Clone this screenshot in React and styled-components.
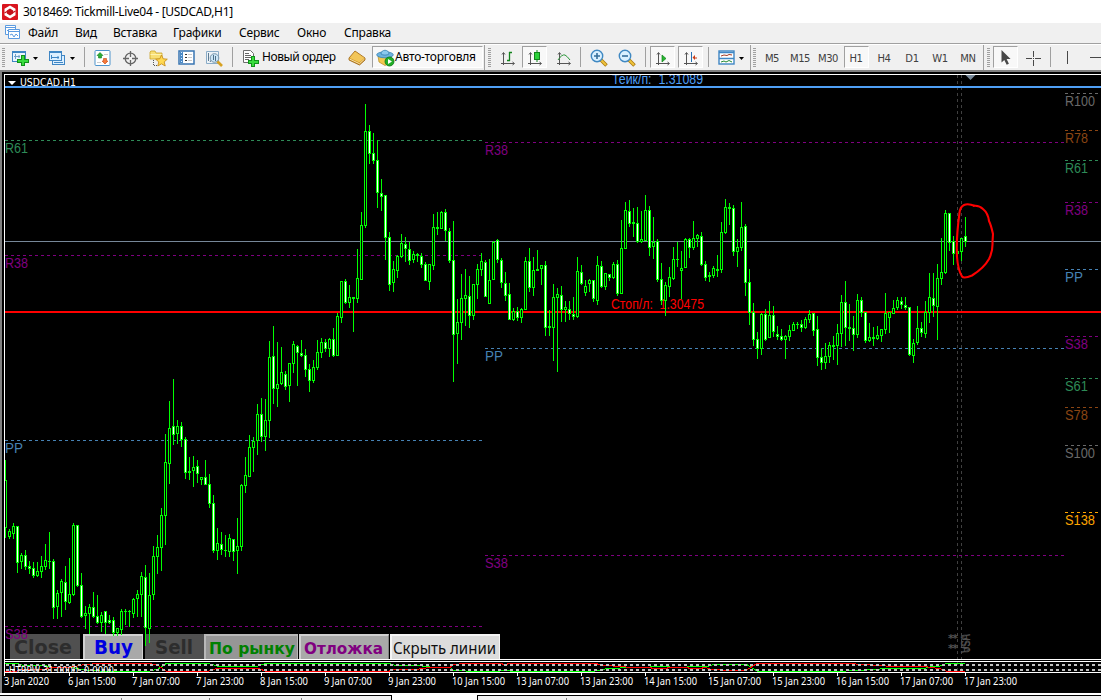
import React from 'react'
import styled, {createGlobalStyle} from 'styled-components'

const GlobalStyle = createGlobalStyle`
    *{
        box-sizing: border-box;
    }
    body{
        margin: 0;
        overflow: hidden;
        background-color: #f0f0f0;
        font-family: "Noto Sans", "Open Sans", sans-serif;
    }
`

// one row = ten hours, each candle is [high, body top, body bottom, low, bearish]
const candles = [
    [460,480,528,538,0],[529,531,537,539,0],[523,526,534,539,0],[526,526,563,573,1],[553,555,562,569,0],[550,555,567,570,1],[561,566,569,574,1],[562,568,576,578,1],[562,571,576,577,0],[556,566,572,578,0],
    [544,560,567,570,0],[532,561,562,569,0],[559,561,608,619,1],[590,593,607,619,0],[579,581,593,617,0],[566,582,602,610,1],[558,594,603,604,0],[523,525,595,596,0],[525,525,586,587,1],[573,585,617,618,1],
    [606,613,616,629,0],[604,607,614,634,0],[592,607,617,618,1],[595,616,623,624,1],[612,615,623,632,0],[611,611,623,634,1],[615,620,623,624,1],[617,620,633,636,1],[628,628,633,636,0],[609,611,630,635,0],
    [609,611,612,625,0],[610,611,612,627,0],[598,599,614,618,0],[590,594,599,617,0],[572,576,595,617,0],[565,577,628,646,1],[573,595,629,643,0],[546,556,595,600,0],[535,547,557,574,0],[508,515,548,571,0],
    [434,462,516,545,0],[401,428,464,484,0],[379,426,435,445,1],[420,426,434,444,0],[422,426,440,447,1],[437,439,473,479,1],[457,471,473,480,0],[456,467,471,487,0],[460,466,474,483,1],[477,477,480,485,0],
    [460,477,485,485,1],[474,484,504,508,1],[495,503,551,553,1],[528,543,551,560,0],[532,544,550,555,1],[535,550,551,557,0],[534,538,552,557,0],[539,539,552,561,1],[518,546,551,574,0],[484,485,547,551,0],
    [457,475,486,493,0],[435,447,477,477,0],[437,441,448,472,0],[404,414,441,455,0],[398,414,437,442,1],[399,420,437,451,0],[341,357,421,438,0],[326,356,389,404,1],[342,384,389,407,0],[347,372,384,385,0],
    [371,374,387,390,1],[363,363,386,402,0],[341,344,364,373,0],[345,346,353,386,1],[340,353,356,357,1],[349,355,370,377,1],[364,369,381,392,1],[360,367,381,383,0],[340,352,368,370,0],[338,342,353,358,0],
    [339,342,349,352,1],[338,339,349,357,0],[328,339,356,357,1],[313,316,356,356,0],[281,281,318,323,0],[279,281,303,304,1],[285,297,303,308,0],[297,297,299,332,0],[249,278,299,303,0],[212,225,280,280,0],
    [104,131,226,228,0],[125,131,154,164,1],[133,153,161,164,1],[140,160,193,208,1],[179,193,197,211,1],[195,195,238,260,1],[232,237,285,291,1],[261,269,283,292,0],[255,256,271,278,0],[234,243,257,258,0],
    [237,244,249,262,1],[242,249,261,265,1],[251,254,260,263,0],[253,254,256,262,0],[253,256,265,268,1],[262,264,281,281,1],[264,264,282,290,0],[214,227,266,270,0],[212,227,229,235,0],[211,212,229,229,0],
    [209,212,231,241,1],[228,231,261,263,1],[221,260,335,382,1],[299,322,334,364,0],[274,298,323,340,0],[269,295,299,326,0],[276,296,316,328,1],[284,284,316,320,0],[264,269,285,299,0],[253,261,270,276,0],
    [260,262,297,297,1],[259,280,304,304,0],[241,242,280,280,0],[239,240,260,263,1],[258,260,283,288,1],[272,283,296,301,1],[283,294,320,320,1],[308,311,320,321,0],[307,311,318,321,1],[308,309,318,323,0],
    [257,261,310,310,0],[248,261,288,292,1],[257,270,288,296,0],[250,269,271,271,0],[265,265,269,285,0],[261,265,328,336,1],[310,326,328,336,0],[284,297,328,361,0],[288,294,298,372,0],[286,295,310,322,1],
    [301,307,310,322,0],[301,309,314,320,1],[297,314,317,320,1],[257,271,317,318,0],[265,272,284,285,1],[280,286,293,296,0],[279,280,284,292,0],[280,280,299,302,1],[256,265,301,305,0],[261,266,287,288,1],
    [273,273,287,290,0],[274,274,278,281,1],[262,264,278,279,0],[260,264,294,296,1],[220,248,294,294,0],[202,210,249,249,0],[200,211,224,227,1],[208,222,224,237,0],[207,223,242,243,1],[211,239,242,243,0],
    [195,210,241,241,0],[206,210,248,256,1],[217,242,247,259,0],[239,241,280,282,1],[263,279,301,305,1],[282,285,301,316,0],[267,277,287,297,0],[247,259,279,280,0],[242,259,260,267,0],[251,268,271,299,0],
    [238,239,268,268,0],[238,239,248,258,1],[221,238,248,250,0],[234,235,239,247,0],[232,236,265,266,1],[261,264,278,281,1],[272,275,277,282,0],[266,268,276,278,0],[255,269,271,277,0],[222,232,270,273,0],
    [199,207,233,234,0],[203,207,209,225,0],[205,208,252,256,1],[239,247,252,267,0],[202,227,248,251,0],[224,226,283,296,1],[269,282,313,325,1],[303,312,340,346,1],[332,339,349,359,1],[313,314,349,355,0],
    [309,314,340,341,1],[301,315,338,338,0],[306,315,332,337,1],[326,334,337,340,1],[329,336,340,341,1],[335,336,340,359,0],[325,330,337,341,0],[322,324,331,331,0],[322,324,325,329,0],[320,324,328,332,1],
    [317,319,328,329,0],[310,314,320,323,0],[313,313,331,336,1],[316,329,358,366,1],[348,357,363,370,1],[343,356,363,369,0],[342,345,357,363,0],[336,345,347,360,0],[324,333,346,365,0],[295,302,334,347,0],
    [281,302,328,346,1],[304,327,329,341,0],[316,328,335,351,1],[294,300,335,338,0],[297,300,313,317,1],[312,312,341,343,1],[323,337,341,342,0],[327,337,339,346,0],[326,335,339,340,0],[329,329,336,342,0],
    [293,313,330,334,0],[312,312,318,333,0],[300,308,314,314,0],[297,300,308,310,0],[297,301,305,309,1],[297,305,308,310,1],[307,307,355,356,1],[339,343,356,363,0],[306,328,343,345,0],[322,328,333,337,1],
    [301,312,334,338,0],[273,297,313,323,0],[273,298,306,317,1],[264,278,307,340,0],[238,272,279,285,0],[210,213,273,274,0],[213,213,243,251,1],[236,241,254,265,1],[251,251,254,261,0],[238,238,252,261,0],
    [217,236,242,247,1],
]

// [x from, x to, y, color, label, label width]
const levels = [
    [5, 483, 140, '#2e8b57', 'R61', 23],
    [5, 483, 255, '#800080', 'R38', 23],
    [5, 483, 440, '#4682b4', 'PP', 18],
    [5, 483, 626, '#800080', 'S38', 23],
    [485, 1064, 142, '#800080', 'R38', 23],
    [485, 1064, 348, '#4682b4', 'PP', 18],
    [485, 1064, 555, '#800080', 'S38', 23],
    [1065, 1098, 93, '#696969', 'R100', 30],
    [1065, 1098, 130, '#8b4513', 'R78', 23],
    [1065, 1098, 160, '#2e8b57', 'R61', 23],
    [1065, 1098, 202, '#800080', 'R38', 23],
    [1065, 1098, 269, '#4682b4', 'PP', 18],
    [1065, 1098, 336, '#800080', 'S38', 23],
    [1065, 1098, 378, '#2e8b57', 'S61', 23],
    [1065, 1098, 407, '#8b4513', 'S78', 23],
    [1065, 1098, 445, '#696969', 'S100', 30],
    [1065, 1098, 512, '#ffa500', 'S138', 30],
]

const dates = [
    '3 Jan 2020', '6 Jan 15:00', '7 Jan 07:00', '7 Jan 23:00', '8 Jan 15:00', '9 Jan 07:00', '9 Jan 23:00', '10 Jan 15:00',
    '13 Jan 07:00', '13 Jan 23:00', '14 Jan 15:00', '15 Jan 07:00', '15 Jan 23:00', '16 Jan 15:00', '17 Jan 07:00', '17 Jan 23:00',
]

// oscillator: the red line is the green one mirrored around the middle
const wave = [
    [5,663],[15,663],[22,665],[43,665],[51,667],[70,667],[84,670],[100,671],[150,671],[158,669],[167,663],[207,663],[217,666],[258,666],[267,663],
    [388,663],[394,665],[415,665],[430,667],[450,667],[453,670],[466,671],[500,671],[505,670],[510,671],[595,671],[605,669],[620,668],[632,667],[650,667],[653,666],[665,666],
    [670,667],[687,667],[690,666],[700,666],[705,667],[712,665],[728,664],[746,664],[757,671],[846,671],[865,670],[880,669],[892,668],[926,668],[930,667],[940,666],[947,663],[965,663],
]
const toPoints = (list) => list.map((p) => p.join(',')).join(' ')

const App = () => {
    return (
        <Window>
            <GlobalStyle />
            <TitleBar>
                <LogoIcon />
                <Title>3018469: Tickmill-Live04 - [USDCAD,H1]</Title>
            </TitleBar>
            <MenuBar>
                <ChildIcon />
                <MenuItem $w={29} $ml={8}>Файл</MenuItem>
                <MenuItem $w={21} $ml={18}>Вид</MenuItem>
                <MenuItem $w={42} $ml={17}>Вставка</MenuItem>
                <MenuItem $w={48} $ml={18}>Графики</MenuItem>
                <MenuItem $w={40} $ml={18}>Сервис</MenuItem>
                <MenuItem $w={29} $ml={18}>Окно</MenuItem>
                <MenuItem $w={46} $ml={18}>Справка</MenuItem>
            </MenuBar>
            <Toolbar />
            <ChartWindow />
            <TabStrip>
                <Tab $w={122} />
                <Tab $w={88} />
                <Tab $w={92} />
                <Tab $w={89} $last />
                <Tab $w={87} $active />
                <Tab $w={89} />
                <Tab $w={534} $last />
            </TabStrip>
        </Window>
    )
}
export default App;

const Toolbar = () => (
    <ToolRow>
        <GripSlot />
        <Tool><NewChartIcon /></Tool>
        <Tool $w={7}><Arrow /></Tool>
        <Tool $ml={5}><ProfilesIcon /></Tool>
        <Tool $w={7}><Arrow /></Tool>
        <Separator $ml={8} />
        <Tool $ml={5}><MarketIcon /></Tool>
        <Tool $ml={3}><DataIcon /></Tool>
        <Tool $ml={3}><NavigatorIcon /></Tool>
        <Tool $ml={3}><TerminalIcon /></Tool>
        <Tool $ml={3}><TesterIcon /></Tool>
        <Separator $ml={5} />
        <Tool $ml={6} $w={23}><OrderIcon /></Tool>
        <ToolText $w={75} $ls={-.4}>Новый ордер</ToolText>
        <Tool $ml={7}><BookIcon /></Tool>
        <Pressed $ml={3} $w={111}>
            <ExpertIcon />
            <ToolText $w={84}>Авто-торговля</ToolText>
        </Pressed>
        <Separator $ml={1} $tall />
        <GripSlot $ml={1} />
        <Tool $ml={2}><BarsIcon /></Tool>
        <Pressed $ml={2}><CandleIcon /></Pressed>
        <Tool $ml={4}><LineIcon /></Tool>
        <Separator $ml={4} />
        <Tool $ml={5}><ZoomIcon plus /></Tool>
        <Tool $ml={3}><ZoomIcon /></Tool>
        <Separator $ml={6} />
        <Pressed $ml={4}><ScrollIcon /></Pressed>
        <Pressed $ml={3}><ShiftIcon /></Pressed>
        <Separator $ml={5} />
        <Tool $ml={5}><TemplateIcon /></Tool>
        <Tool $w={5}><Arrow /></Tool>
        <Separator $ml={6} $tall />
        <GripSlot />
        {['M5', 'M15', 'M30', 'H1', 'H4', 'D1', 'W1', 'MN'].map((p) => (
            <Tool key={p} $w={28}>
                {p === 'H1' ? <Pressed><Period>{p}</Period></Pressed> : <Period>{p}</Period>}
            </Tool>
        ))}
        <Separator $ml={1} $tall />
        <GripSlot $ml={1} />
        <Pressed $ml={1}><CursorIcon /></Pressed>
        <Tool $ml={3}><CrossIcon /></Tool>
        <Separator $ml={4} />
        <Tool $ml={4}><svg width="16" height="16"><path d="M7.500 1v13" stroke="#484848" /></svg></Tool>
        <Tool $ml={3}><svg width="14" height="16"><path d="M1 7.500h13" stroke="#484848" /></svg></Tool>
    </ToolRow>
)

const GripSlot = ({$ml}) => <Tool $w={7} $ml={$ml}><Grip /></Tool>

const ChartWindow = () => (
    <Frame>
        <TradeButtons>
            <TradeButton $w={70} $pad={2} $bg="#505050" $color="#2d2d2d">
                <Caption w={58} size={19}>Close</Caption>
            </TradeButton>
            <TradeButton $ml={3} $w={60} $pad={9} $bg="#a9a9a9" $color="#0000e0" $edge="#d0d0d0">
                <Caption w={39} size={19}>Buy</Caption>
            </TradeButton>
            <TradeButton $ml={2} $w={59} $pad={8} $bg="#505050" $color="#2d2d2d">
                <Caption w={38} size={19}>Sell</Caption>
            </TradeButton>
            <TradeButton $w={94} $pad={3} $bg="#969696" $color="#008000" $edge="#b8b8b8">
                <Caption w={86} size={16}>По рынку</Caption>
            </TradeButton>
            <TradeButton $ml={1} $w={90} $pad={3} $bg="#a9a9a9" $color="#800080" $edge="#d0d0d0" $shade>
                <Caption w={79} size={16}>Отложка</Caption>
            </TradeButton>
            <TradeButton $ml={1} $w={110} $pad={1} $bg="#dcdcdc" $color="#101010" $edge="#f4f4f4">
                <Caption w={103} size={17} light>Скрыть линии</Caption>
            </TradeButton>
        </TradeButtons>
        <Plot viewBox="0 70 1101 625" width="1101" height="625">
            <g shapeRendering="crispEdges">
                <path d="M4.5 661V74.5H1101M4 659.5H1101M4.5 673V661.5H1101M4 672.5H1101" fill="none" stroke="#fff" />
                <path d="M0 694H1101" stroke="#fff" strokeWidth="2" />
                <path d="M957.5 75V659M961.5 75V659" stroke="#404040" strokeDasharray="3 3" />
                <path d="M957.5 662V672M961.5 662V672" stroke="#333" strokeDasharray="3 3" />
                {levels.map(([from, to, y, color], i) => (
                    <path key={i} d={`M${from} ${y + .5}H${to}`} stroke={color} strokeDasharray="3 3" />
                ))}
                <path d="M5 241.5H1101" stroke="#778899" />
                <path d="M5 312H1101" stroke="#f00" strokeWidth="2" />
                <path d="M5 87H1101" stroke="#4f9ff5" strokeWidth="2" />
            </g>
            {levels.map(([x, , y, color, label, w], i) => (
                <Level key={i} x={x} y={y + 13} fill={color} textLength={w} lengthAdjust="spacingAndGlyphs">{label}</Level>
            ))}
            <Level x="611" y="309" fill="#f00" textLength="93" lengthAdjust="spacingAndGlyphs">Стоп/л:  1.30475</Level>
            <clipPath id="top"><path d="M5 75H1101V90H5Z" /></clipPath>
            <g clipPath="url(#top)">
                <Level x="612" y="84" fill="#4f9ff5" textLength="91" lengthAdjust="spacingAndGlyphs">Тейк/п:  1.31089</Level>
            </g>
            <clipPath id="sym"><path d="M5 75H200V86H5Z" /></clipPath>
            <g clipPath="url(#sym)">
                <path d="M8 81h8l-4 4z" fill="#fff" />
                <Small x="20" y="86" textLength="56" lengthAdjust="spacingAndGlyphs">USDCAD,H1</Small>
            </g>
            <path d="M965.5 75h10l-5 5z" fill="#778899" />
            <g shapeRendering="crispEdges">
                {candles.map(([high, top, bottom, low, bear], i) => {
                    const x = 5 + i * 4
                    return (
                        <g key={i} fill="#0f0">
                            <rect x={x} y={high} width="1" height={low - high} />
                            <rect x={x - 1} y={top} width="3" height={bottom - top} />
                            {bottom - top > 2 && <rect x={x} y={top + 1} width="1" height={bottom - top - 2} fill={bear ? '#fff' : '#000'} />}
                        </g>
                    )
                })}
                <path d="M4.5 440V560" stroke="#fff" />
            </g>
            <path
                d="M975 206Q968 203 964 205Q960 207 959.500 213Q956 238 957 257Q958 270 962 276.500Q964 279 972 275.500Q984 268 989 259Q993 251 992.500 242L993 234Q991 225 989 221Q988 213 983 209Q979 205 973 206"
                fill="none" stroke="#f00" strokeWidth="2.1"
            />
            <Star x="948" y="642">**</Star>
            <Star x="948" y="652">**</Star>
            <Event transform="translate(970 653) rotate(-90)" textLength="19" lengthAdjust="spacingAndGlyphs">USA</Event>
            <Event transform="translate(961 634) rotate(90)" textLength="19" lengthAdjust="spacingAndGlyphs">USA</Event>
            <g shapeRendering="crispEdges" fill="none">
                <polyline points={toPoints(wave)} stroke="#0f0" />
                <polyline points={toPoints(wave.map(([x, y]) => [x, 1334.5 - y]))} stroke="#f00" />
                <path d="M6 665H1101M6 670H1101" stroke="#c0c0c0" strokeWidth="2" strokeDasharray="3 3" />
            </g>
            <clipPath id="osc"><path d="M5 666H200V672H5Z" /></clipPath>
            <g clipPath="url(#osc)">
                <Small x="9" y="674" textLength="105" lengthAdjust="spacingAndGlyphs">HTRPW 31.0000 -0.0000</Small>
            </g>
            {dates.map((d, i) => (
                <g key={d}>
                    <rect x={i ? 5 + i * 64 : 4} y="673" width="1" height="3" fill="#fff" />
                    <DateText x={4 + i * 64} y="685" textLength={d.length === 12 ? 53 : d.length === 11 ? 48 : 45} lengthAdjust="spacingAndGlyphs">{d}</DateText>
                </g>
            ))}
        </Plot>
    </Frame>
)

const Caption = ({w, size, light, children}) => (
    <CaptionBox width={w + 1} height="23">
        <CaptionText $size={size} $light={light} x="0" y="18" textLength={w} lengthAdjust="spacingAndGlyphs">{children}</CaptionText>
    </CaptionBox>
)

const LogoIcon = () => (
    <svg width="16" height="16">
        <rect width="16" height="16" rx="1" fill="#d9141e" />
        <path d="M8 1.500L13.500 4.800V11.200L8 14.500L2.500 11.200V4.800Z" fill="#fff" />
        <path d="M8 4.500l3.200 1.900v3.200L8 11.500 4.800 9.600V6.400z" fill="#c4101a" />
        <path d="M2.500 9L5 7.500M11 8.500L13.500 7" stroke="#c4101a" strokeWidth="1.200" />
    </svg>
)
const ChildIcon = () => (
    <svg width="15" height="15" fill="none" stroke="#5c9be0">
        <path d="M.5.5h10v9h-10zM.5 2.500h10M2 5l2 2 2-2" fill="#fff" />
        <path d="M3.500 4.500h11v9h-11zM3.500 6.500h11" fill="#fff" />
        <path d="M5 10l2-1 2 3 2-3 2 2" />
    </svg>
)
const Arrow = () => <svg width="5" height="3"><path d="M0 0h5L2.500 3z" fill="#000" /></svg>
const NewChartIcon = () => (
    <svg width="18" height="16">
        <rect x="1.500" y="1.500" width="13" height="10" fill="#eaf5ff" stroke="#3f86c4" />
        <path d="M1 2.500h14" stroke="#3f86c4" />
        <path d="M4.500 4v5M3 6.500h6M8 5v3" stroke="#6f9fc8" fill="none" />
        <path d="M10 5h4v4h4v4h-4v3h-4v-3H6V9h4z" fill="#11921a" />
        <path d="M11 6h2v4h4v2h-4v3h-2v-3H7v-2h4z" fill="#39dc3e" />
    </svg>
)
const ProfilesIcon = () => (
    <svg width="18" height="16" stroke="#3f86c4" fill="#dcefff">
        <rect x="4.500" y="5.500" width="12" height="9" />
        <path d="M6 12.500h9" />
        <rect x="1.500" y="1.500" width="12" height="9" />
        <path d="M1 2.500h13M3.500 5v4M3 7.500h8M10 6v3" />
    </svg>
)
const MarketIcon = () => (
    <svg width="17" height="16">
        <rect x="1" y=".5" width="15" height="15" rx="1" fill="#fff" stroke="#4e94cc" />
        <path d="M10 4.500h4M3 12.500h4" stroke="#ccc" />
        <path d="M6 2.500l3 3H7.500V8h-3V5.500H3z" fill="#2cae35" stroke="#12801c" strokeWidth=".6" />
        <path d="M11 14l-3-3h1.500V8.500h3V11H14z" fill="#f57a3a" stroke="#c74310" strokeWidth=".6" />
    </svg>
)
const DataIcon = () => (
    <svg width="17" height="17" fill="none" stroke="#666" strokeWidth="1.300">
        <circle cx="8.500" cy="8.500" r="5.300" />
        <path d="M8.500 1v6M8.500 10v6M1 8.500h6M10 8.500h6" />
    </svg>
)
const NavigatorIcon = () => (
    <svg width="19" height="17">
        <path d="M1 2l1-1h4l1 2h6v6H1z" fill="#f8df75" stroke="#c9a227" strokeWidth=".8" />
        <path d="M1.500 4.500h11" stroke="#fff3b0" />
        <path d="M4.500 10v6M5 15.500h4" stroke="#555" strokeDasharray="1 1" />
        <path d="M12.500 5l1.700 3.800 4.100.4-3.100 2.700 1 4.100-3.700-2.200L8.800 16l1-4.100-3.100-2.700 4.100-.4z" fill="#ffd951" stroke="#c8901c" strokeWidth=".9" />
    </svg>
)
const TerminalIcon = () => (
    <svg width="17" height="16">
        <rect x="1" y="1" width="15" height="13" fill="#fff" stroke="#3975b2" strokeWidth="1.500" />
        <rect x="2" y="2" width="3" height="11" fill="#4b8ac6" />
        <path d="M3.500 2v11" stroke="#d8eaff" strokeDasharray="1 2" />
        <path d="M7 4.500h2M7 7.500h2M7 10.500h2" stroke="#333" />
        <path d="M10 4.500h4M10 7.500h4M10 10.500h4" stroke="#c9c9c9" />
    </svg>
)
const TesterIcon = () => (
    <svg width="19" height="17">
        <path d="M1.500 1.500h12v12h-12z" fill="#edf3f8" stroke="#8badc8" />
        <path d="M3.500 3v8M5 12l2-3" stroke="#5e7b91" />
        <path d="M12 11l5 5" stroke="#d7a122" strokeWidth="2.600" />
        <circle cx="9.500" cy="8" r="4.300" fill="#cce6f7" stroke="#7795aa" />
        <path d="M8.500 5v5M10.500 6v5" stroke="#4f7189" />
    </svg>
)
const OrderIcon = () => (
    <svg width="17" height="18">
        <path d="M1.500 1.500h7l3 3v9h-10z" fill="#fff" stroke="#6e6e6e" />
        <path d="M3 4.500h4M3 6.500h6M3 8.500h6M3 10.500h4" stroke="#666" />
        <path d="M9 7h4v4h4v4h-4v3H9v-3H6v-4h3z" fill="#11921a" />
        <path d="M10 8h2v4h4v2h-4v3h-2v-3H7v-2h3z" fill="#39dc3e" />
    </svg>
)
const BookIcon = () => (
    <svg width="18" height="16">
        <path d="M1 8l6-7 10 7v2l-5.500 5L1 10z" fill="#c98a1c" stroke="#99600c" strokeWidth=".8" />
        <path d="M1.500 8L7 1.500 16.500 8l-5 4.500z" fill="#f2c65a" />
        <path d="M1.500 9l10 4.700L16.500 9" stroke="#fff0bb" fill="none" strokeWidth=".9" />
    </svg>
)
const ExpertIcon = () => (
    <svg width="19" height="18">
        <path d="M2 7l1 6 6 3.500 6-3V7z" fill="#f1c84f" stroke="#b88a1f" strokeWidth=".7" />
        <ellipse cx="9" cy="5.800" rx="8.300" ry="3" fill="#6db3df" stroke="#3682b2" strokeWidth=".8" />
        <path d="M5 5c0-5 8-5 8 0-2 1.500-6 1.500-8 0z" fill="#8bc9ef" stroke="#3682b2" strokeWidth=".8" />
        <circle cx="13.500" cy="12.500" r="4.500" fill="#21ae28" stroke="#0b7914" strokeWidth=".8" />
        <path d="M12 10v5l4-2.500z" fill="#fff" />
    </svg>
)
const Axes = () => <path d="M3.500 3v12M1 13.500h13M2 4.500l1.500-2 1.500 2M12.500 12l2 1.500-2 1.500" stroke="#555" fill="none" />
const BarsIcon = () => (
    <svg width="16" height="17">
        <Axes />
        <path d="M9.500 2v9M7 10.500h3M9 2.500h3" stroke="#11831b" strokeWidth="1.300" />
    </svg>
)
const CandleIcon = () => (
    <svg width="16" height="17">
        <Axes />
        <path d="M10 0v12" stroke="#11831b" />
        <rect x="7.500" y="2.500" width="5" height="7" fill="#2bd23a" stroke="#11831b" />
    </svg>
)
const LineIcon = () => (
    <svg width="16" height="17">
        <Axes />
        <path d="M2 10q4-6 7-5 2 1 5 5" stroke="#2b973a" fill="none" />
    </svg>
)
const ZoomIcon = ({plus}) => (
    <svg width="18" height="18">
        <path d="M11 11l5.500 5.500" stroke="#a87911" strokeWidth="3.500" />
        <path d="M11 11l5 5" stroke="#efc33b" strokeWidth="2" />
        <circle cx="7" cy="7" r="5.700" fill="#d9f0ff" stroke="#3f88c2" strokeWidth="1.400" />
        <path d={plus ? 'M4 7h6M7 4v6' : 'M4 7h6'} stroke="#356e9b" strokeWidth="1.600" />
    </svg>
)
const ScrollIcon = () => (
    <svg width="16" height="17">
        <Axes />
        <path d="M7 5v7l4-3.500z" fill="#27b532" stroke="#11831b" strokeWidth=".7" />
    </svg>
)
const ShiftIcon = () => (
    <svg width="16" height="17">
        <Axes />
        <path d="M8.500 2v10" stroke="#2772b4" />
        <path d="M14 7.500h-2V5L9.500 7.500l2.500 2.500V8.500h2z" fill="#c93c16" />
    </svg>
)
const TemplateIcon = () => (
    <svg width="17" height="16">
        <rect x="1" y="1" width="15" height="13" fill="#fff" stroke="#3f86c4" strokeWidth="1.400" />
        <path d="M1 2.500h15M1 8.500h15" stroke="#3f86c4" strokeWidth="1.500" />
        <path d="M3 6l3-1 3 .5 2-1 3 .5" stroke="#a33a24" fill="none" />
        <path d="M3 12l3-1 2 1 3-1.500 3 1.500" stroke="#248a32" fill="none" />
    </svg>
)
const CursorIcon = () => (
    <svg width="16" height="16">
        <path d="M3.500 0v12.500l2.800-2.500 2.400 4.700 2.200-1L8.600 9h4z" fill="#484848" />
    </svg>
)
const CrossIcon = () => (
    <svg width="17" height="17" stroke="#484848">
        <path d="M8.500 1v6M8.500 10v6M1 8.500h6M10 8.500h6M8 8.500h1" />
    </svg>
)

const Window = styled.div`
    width: 1101px;
    height: 700px;
    display: flex;
    flex-direction: column;
    overflow: hidden;
`
const TitleBar = styled.div`
    height: 23px;
    flex: none;
    display: flex;
    align-items: center;
    padding-left: 2px;
    background-color: #fff;
`
const Title = styled.span`
    margin-left: 5px;
    font-size: 12px;
    letter-spacing: -.3px;
    white-space: nowrap;
    color: #000;
`
const MenuBar = styled.div`
    height: 20px;
    flex: none;
    display: flex;
    align-items: center;
    padding-left: 5px;
    padding-bottom: 1px;
    background-color: #f0f0f0;
`
const MenuItem = styled.span`
    width: ${(props) => props.$w}px;
    margin-left: ${(props) => props.$ml}px;
    font-size: 12px;
    letter-spacing: -.2px;
    white-space: nowrap;
    color: #000;
`
const ToolRow = styled.div`
    height: 27px;
    flex: none;
    display: flex;
    align-items: center;
    border-top: 1px solid #a0a0a0;
    background-color: #f0f0f0;
    box-shadow: inset 0 1px #fff;
    overflow: hidden;
`
const Tool = styled.div`
    width: ${(props) => props.$w || 25}px;
    height: 22px;
    margin-left: ${(props) => props.$ml || 0}px;
    flex: none;
    display: flex;
    align-items: center;
    justify-content: center;

    > svg{
        margin-top: 2px;
    }
`
const Pressed = styled(Tool)`
    border: 1px solid #a0a0a0;
    border-right-color: #fff;
    border-bottom-color: #fff;
    background-color: #f8f8f8;
`
const ToolText = styled.span`
    width: ${(props) => props.$w}px;
    flex: none;
    font-size: 12px;
    line-height: 18px;
    letter-spacing: ${(props) => props.$ls || -.2}px;
    white-space: nowrap;
    color: #000;
`
const Period = styled.span`
    margin-top: 2px;
    font-family: "DejaVu Sans", sans-serif;
    font-size: 10px;
    letter-spacing: -.4px;
    color: #404040;
`
const Separator = styled.div`
    width: 1px;
    height: ${(props) => (props.$tall ? 25 : 20)}px;
    margin-left: ${(props) => props.$ml}px;
    flex: none;
    background-color: #a0a0a0;
`
const Grip = styled.div`
    width: 3px;
    height: 19px;
    background: repeating-linear-gradient(#a0a0a0 0 1px, #f0f0f0 1px 2px);
`
const Frame = styled.div`
    position: relative;
    height: 625px;
    flex: none;
    background-color: #000;
    border-top: 2px solid #808080;
    border-left: 2px solid #808080;
`
const Plot = styled.svg`
    position: absolute;
    top: -2px;
    left: -2px;
    display: block;
`
const TradeButtons = styled.div`
    position: absolute;
    left: 8px;
    top: 562px;
    display: flex;
`
const TradeButton = styled.div`
    width: ${(props) => props.$w}px;
    height: 25px;
    margin-left: ${(props) => props.$ml || 0}px;
    padding-left: ${(props) => props.$pad}px;
    background-color: ${(props) => props.$bg};
    border-style: solid;
    border-width: 2px 1px 0 2px;
    border-color: ${(props) => props.$edge || props.$bg};
    border-right-color: ${(props) => (props.$shade ? '#808080' : props.$edge || props.$bg)};
    fill: ${(props) => props.$color};
`
const CaptionBox = styled.svg`
    display: block;
    overflow: visible;
`
const CaptionText = styled.text`
    font-family: ${(props) => (props.$light ? '"Noto Sans"' : '"DejaVu Sans"')}, sans-serif;
    font-weight: ${(props) => (props.$light ? 400 : 700)};
    font-size: ${(props) => props.$size}px;
`
const Level = styled.text`
    font-family: "Liberation Sans", Arial, sans-serif;
    font-size: 14px;
    white-space: pre;
`
const Small = styled.text`
    font-family: "DejaVu Sans", sans-serif;
    font-size: 10px;
    fill: #fff;
`
const DateText = styled.text`
    font-family: "Noto Sans", sans-serif;
    font-size: 10px;
    fill: #fff;
`
const Event = styled.text`
    font-family: "Liberation Sans", Arial, sans-serif;
    font-size: 12px;
    fill: #505050;
`
const Star = styled(Event)`
    font-weight: 700;
    font-family: "DejaVu Sans", sans-serif;
    font-size: 11px;
    letter-spacing: -1.5px;
`
const TabStrip = styled.div`
    height: 5px;
    flex: none;
    display: flex;
    background-color: #f0f0f0;
`
const Tab = styled.div`
    width: ${(props) => props.$w}px;
    height: 5px;
    flex: none;
    background: ${(props) => (props.$active
        ? '#fff'
        : `linear-gradient(#000 0 1px, transparent 1px), linear-gradient(#808080, #808080) ${props.$last ? '-9px' : '100%'} 3px / 1px 2px no-repeat`)};
    border-left: ${(props) => (props.$active ? '1px solid #000' : 'none')};
    border-right: ${(props) => (props.$active ? '1px solid #000' : 'none')};
`
